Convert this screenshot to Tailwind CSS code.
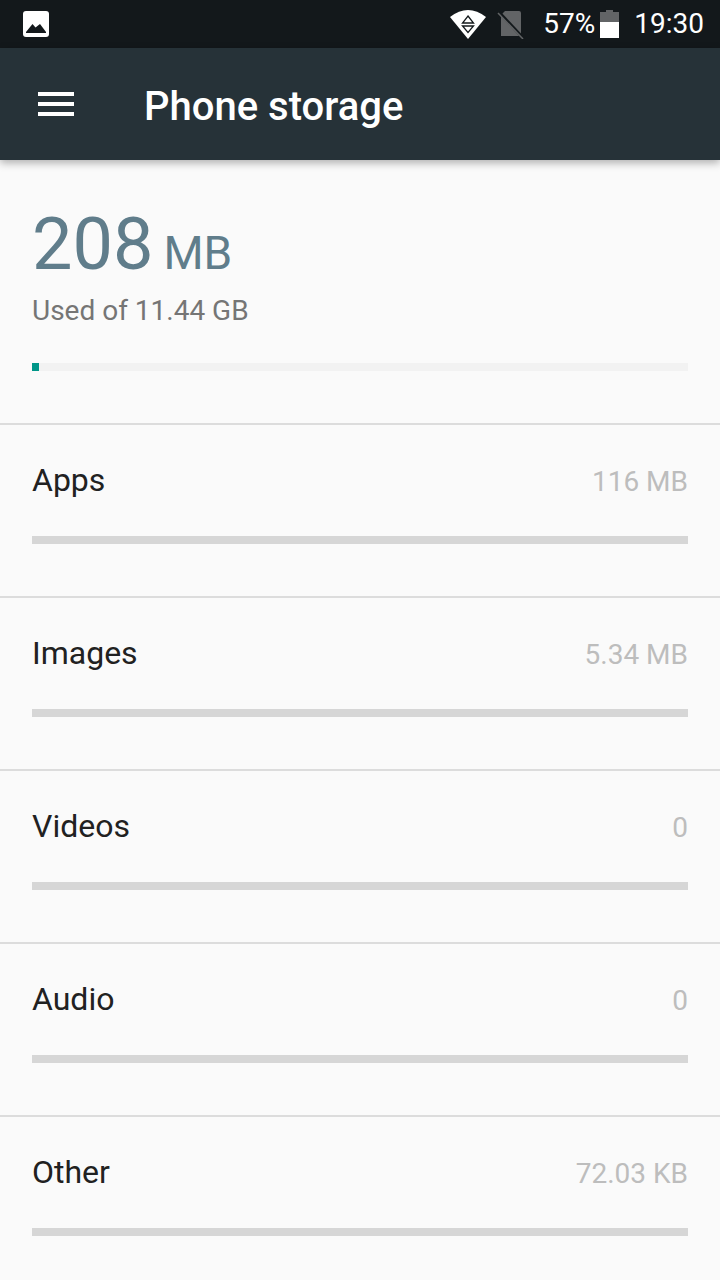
<!DOCTYPE html>
<html><head><meta charset="utf-8"><script src="https://cdn.jsdelivr.net/npm/@tailwindcss/browser@4"></script></head>
<body class="m-0 bg-[#fafafa]">
<div class="w-[720px] h-[1280px] overflow-hidden bg-[#fafafa] font-['Roboto',sans-serif] flex flex-col">
  <div class="h-[48px] bg-[#13181b] flex items-center pl-[23px] pr-[16px] text-white shrink-0">
    <svg width="26" height="26" viewBox="0 0 26 26"><rect width="26" height="26" rx="3" fill="#fff"/><path d="M3 21 L9.500 13 L12.500 16.500 L17 13 L23 21 Z" fill="#13181b"/><rect x="3" y="21" width="20" height="1" fill="#13181b"/></svg>
    <div class="flex-1"></div>
    <svg width="36" height="30" viewBox="0 0 36 30" class="mr-[10px]"><path d="M0 8 Q18 -6 36 8 L18 30 Z" fill="#fff"/><path d="M18 7 L23.500 14 H12.500 Z M12.500 17 H23.500 L18 23.500 Z" fill="#fff" stroke="#13181b" stroke-width="1.300"/></svg>
    <svg width="29" height="30" viewBox="0 0 29 30" class="mr-[18px]"><path d="M9 2 H23 Q25 2 25 4 V27 H5 V6 Z" fill="#626466"/><path d="M3 3 L28 30" stroke="#13181b" stroke-width="3"/><path d="M2 4 L27 30" stroke="#626466" stroke-width="1.500"/></svg>
    <span class="text-[28px] leading-[48px]">57%</span>
    <svg width="19" height="28" viewBox="0 0 19 28" class="mr-[15px] ml-[5px]"><path d="M6 0 H13 V2 H19 V12 H0 V2 H6 Z" fill="#626466"/><rect y="12" width="19" height="16" fill="#fff"/></svg>
    <span class="text-[28px] leading-[48px]">19:30</span>
  </div>
  <div class="h-[112px] bg-[#263238] flex items-center shrink-0 shadow-[0_3px_8px_rgba(0,0,0,0.3)] relative">
    <div class="ml-[38px] w-[36px] flex flex-col gap-[6px]"><div class="h-[4px] bg-white"></div><div class="h-[4px] bg-white"></div><div class="h-[4px] bg-white"></div></div>
    <span class="ml-[70px] mt-[6px] text-white text-[40px] font-medium">Phone storage</span>
  </div>
  <div class="h-[265px] border-b-2 border-[#dcdcdc] px-[32px] shrink-0">
    <div class="flex items-baseline pt-[40px] text-[#607d8b] leading-[90px]"><span class="text-[72px]">208</span><span class="text-[46px] ml-[10px]">MB</span></div>
    <div class="text-[28px] text-[#757575] leading-[36px] mt-[-5px]">Used of 11.44 GB</div>
    <div class="mt-[34px] h-[8px] bg-[#f2f2f2]"><div class="w-[7px] h-[8px] bg-[#009688]"></div></div>
  </div>
  <div class="h-[173px] border-b-2 border-[#dcdcdc] px-[32px] pt-[35px] shrink-0"><div class="flex justify-between items-center h-[40px]"><span class="text-[32px] text-[#212121]">Apps</span><span class="mt-[4px] text-[28px] text-[#bdbdbd]">116 MB</span></div><div class="mt-[36px] h-[8px] bg-[#d6d6d6]"></div></div>
  <div class="h-[173px] border-b-2 border-[#dcdcdc] px-[32px] pt-[35px] shrink-0"><div class="flex justify-between items-center h-[40px]"><span class="text-[32px] text-[#212121]">Images</span><span class="mt-[4px] text-[28px] text-[#bdbdbd]">5.34 MB</span></div><div class="mt-[36px] h-[8px] bg-[#d6d6d6]"></div></div>
  <div class="h-[173px] border-b-2 border-[#dcdcdc] px-[32px] pt-[35px] shrink-0"><div class="flex justify-between items-center h-[40px]"><span class="text-[32px] text-[#212121]">Videos</span><span class="mt-[4px] text-[28px] text-[#bdbdbd]">0</span></div><div class="mt-[36px] h-[8px] bg-[#d6d6d6]"></div></div>
  <div class="h-[173px] border-b-2 border-[#dcdcdc] px-[32px] pt-[35px] shrink-0"><div class="flex justify-between items-center h-[40px]"><span class="text-[32px] text-[#212121]">Audio</span><span class="mt-[4px] text-[28px] text-[#bdbdbd]">0</span></div><div class="mt-[36px] h-[8px] bg-[#d6d6d6]"></div></div>
  <div class="h-[164px] px-[32px] pt-[35px] shrink-0"><div class="flex justify-between items-center h-[40px]"><span class="text-[32px] text-[#212121]">Other</span><span class="mt-[4px] text-[28px] text-[#bdbdbd]">72.03 KB</span></div><div class="mt-[36px] h-[8px] bg-[#d6d6d6]"></div></div>
</div>
</body></html>
